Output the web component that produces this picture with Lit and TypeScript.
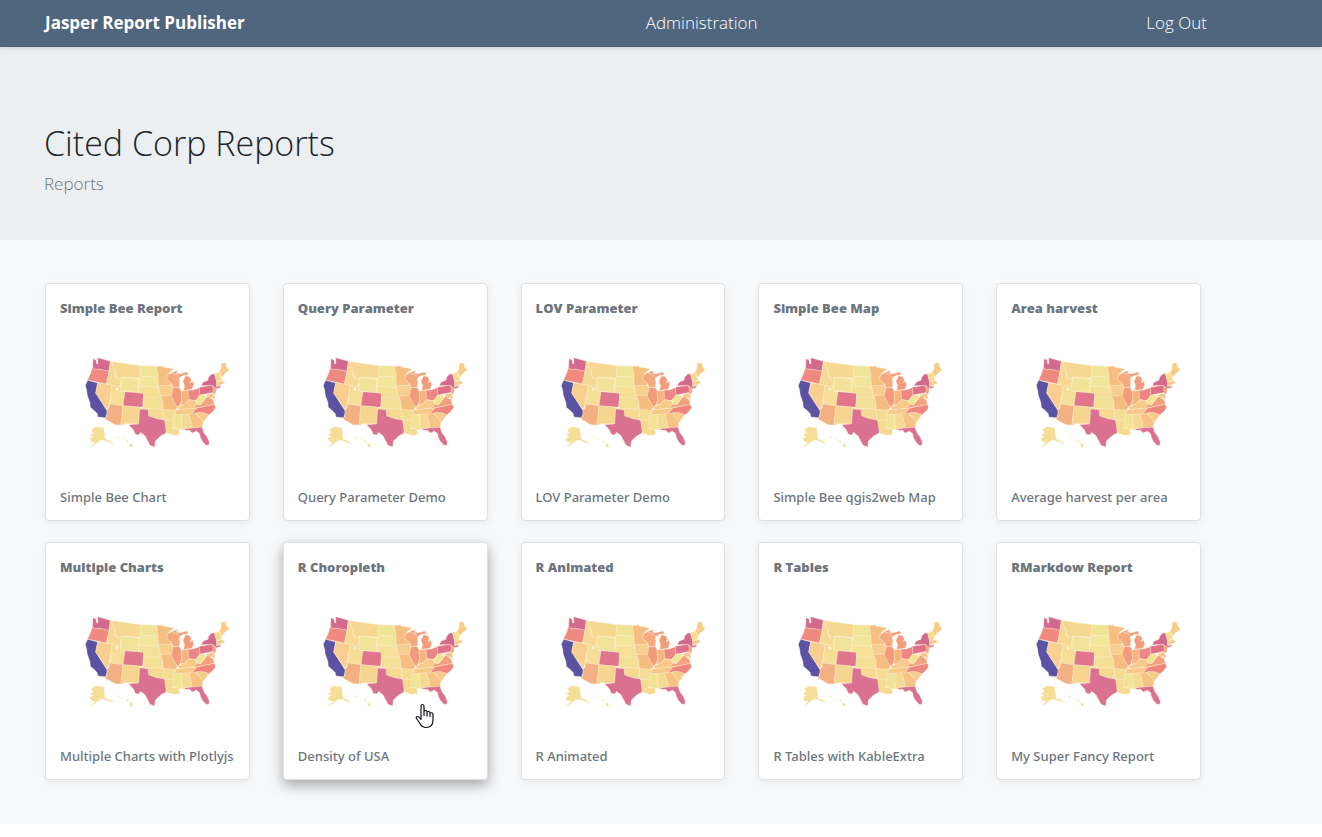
import { LitElement, html, svg, css } from "lit";
import { customElement, property } from "lit/decorators.js";

const STATES: [string, string][] = [
  ["#d4698f", "189,266 198,270 200,282 204,281 203,263 241,274 237,304 208,298 193,298 188,292"],
  ["#f0897f", "188,292 193,298 208,298 237,304 235,316 229,342 173,330 182,310"],
  ["#5b52a3", "173,331 203,339 197,369 231,422 231,430 227,443 204,441 202,431 192,421 181,412 180,398 172,376 170,360 166,346"],
  ["#f8cf90", "203,338 246,346 238,402 231,420 197,369"],
  ["#f6d994", "241,274 247,275 248,289 256,304 254,314 262,327 274,325 271,351 229,342 235,316 237,304"],
  ["#f6d892", "247,275 332,287 330,325 275,321 272,326 262,326 255,312 257,304 248,289"],
  ["#f2e39a", "275,322 328,327 324,368 271,362"],
  ["#f5de96", "246,345 272,350 271,362 285,365 279,407 240,402"],
  ["#ffffff", "257,353 262,354 264,360 260,361"],
  ["#e0758b", "285,365 341,370 338,412 279,407"],
  ["#f3b183", "240,402 279,407 273,465 255,464 225,447 231,438 231,420 237,415 238,404"],
  ["#f6d590", "279,407 329,412 326,462 297,461 282,461 280,465 273,465"],
  ["#f2e496", "332,287 380,289 384,321 330,319"],
  ["#f1e69b", "330,319 384,321 385,354 372,351 327,349"],
  ["#f4e197", "327,349 372,351 385,354 393,384 341,384 341,370 325,368"],
  ["#f4df97", "341,384 393,384 398,392 399,418 339,415"],
  ["#f6da92", "329,414 399,418 402,448 380,446 356,438 354,419 329,417"],
  ["#da7190", "329,417 354,419 356,438 380,446 404,450 409,474 408,489 392,498 376,513 374,531 360,526 355,516 345,497 332,487 326,495 316,493 310,479 296,464 326,462"],
  ["#f6bf82", "380,289 395,289 396,285 399,291 432,297 419,307 412,316 410,328 424,340 424,346 385,348 384,321"],
  ["#f8cf8e", "385,347 425,346 431,360 424,377 391,377"],
  ["#f5bd80", "391,377 424,376 430,391 439,405 442,412 437,421 400,419 398,392"],
  ["#f5dc94", "399,419 437,421 430,451 403,450"],
  ["#f5da92", "404,451 430,451 428,476 444,477 449,488 446,494 431,496 409,489"],
  ["#f4a97f", "412,316 425,308 443,315 449,323 447,333 450,326 448,352 430,353 424,340 410,328"],
  ["#f29d7b", "425,308 438,303 445,304 438,309 450,312 470,306 476,314 460,316 449,323 443,315"],
  ["#f29c7c", "467,317 480,321 484,330 480,339 488,334 491,344 486,358 461,361 464,347 459,334"],
  ["#f29a7c", "430,353 448,353 453,362 455,392 446,411 440,408 430,391 424,377"],
  ["#f6b57f", "453,363 474,361 477,389 464,402 450,406 455,392"],
  ["#ed8684", "474,361 490,360 508,353 510,374 498,391 488,391 476,388"],
  ["#f7ca8b", "441,413 464,402 477,390 496,392 501,402 491,414 450,419"],
  ["#f7c889", "438,420 501,414 500,419 483,432 434,434"],
  ["#f1e494", "432,435 455,433 456,477 447,480 443,476 428,475 430,451"],
  ["#f5da94", "455,433 477,431 486,466 486,474 463,475 464,480 457,480"],
  ["#f7c385", "477,431 496,430 515,449 519,458 516,473 486,474 486,466"],
  ["#da7190", "464,476 486,474 516,472 522,489 531,500 538,517 536,526 528,526 517,514 511,502 509,491 499,483 487,489 479,481 465,481"],
  ["#f7cb8c", "496,430 510,426 520,428 537,434 519,458 508,440"],
  ["#f0877f", "501,414 553,403 557,413 548,425 537,434 520,428 508,427 486,432"],
  ["#f3a27e", "491,415 501,402 512,404 525,388 533,378 550,391 553,403"],
  ["#f0e591", "498,391 510,376 526,376 528,382 512,403 502,402"],
  ["#df7088", "508,352 547,346 551,357 552,367 510,375"],
  ["#d4698f", "514,347 519,337 534,331 536,322 544,313 553,311 560,336 560,350 573,347 570,353 557,356 547,346"],
  ["#f6dc90", "554,311 565,308 568,304 576,330 560,336"],
  ["#f9cb88", "568,305 573,297 574,281 582,278 587,280 590,292 598,299 589,307 583,311 576,322"],
  ["#f8c98b", "560,337 577,332 585,339 577,342 571,345 560,348"],
  ["#f3a681", "549,349 558,353 558,366 554,374 549,369"],
  ["#f7c38b", "527,376 549,370 555,382 551,391 546,380 542,387 535,379"],
  ["#f5de96", "184,479 198,470 221,474 225,507 241,514 251,522 235,516 222,511 212,511 201,518 192,526 180,531 196,517 184,515 179,505 190,500 180,494 190,489"],
  ["#f5de96", "262,500 267,501 266,505 262,503"],
  ["#f5de96", "277,507 283,509 280,511"],
  ["#f5de96", "288,511 296,514 292,518"],
  ["#f5de96", "299,520 309,525 306,532 300,531"],
];

@customElement("report-card")
class ReportCard extends LitElement {
  @property() heading = "";
  @property() caption = "";

  static styles = css`
    :host {
      display: block;
    }
    .card {
      box-sizing: border-box;
      display: flex;
      flex-direction: column;
      height: 100%;
      padding: 14px 14px 13px;
      color: #6c757d;
      background: #fff;
      border: 1px solid #dfe0e2;
      border-radius: 4px;
      box-shadow: 0 2px 8px rgba(0, 0, 0, 0.07);
      text-decoration: none;
    }
    :host([active]) .card {
      box-shadow: 0 5px 14px rgba(0, 0, 0, 0.35);
    }
    .heading {
      margin: 0;
      font-size: 13px;
      font-weight: 800;
      line-height: 20px;
    }
    .map {
      display: block;
      width: 148px;
      height: 94px;
      margin: 38px 0 37px 24px;
    }
    .state {
      stroke: #fbeccb;
      stroke-width: 1;
      stroke-linejoin: round;
    }
    .caption {
      margin: 0;
      font-family: "Noto Sans", "Open Sans", sans-serif;
      font-size: 13px;
      font-weight: 500;
      line-height: 20px;
      white-space: nowrap;
    }
  `;

  render() {
    return html`
      <a class="card" href="#">
        <h2 class="heading">${this.heading}</h2>
        <svg class="map" viewBox="162 258 444 282" role="img" aria-label="Map">
          ${STATES.map(([fill, points]) => svg`<polygon class="state" fill=${fill} points=${points}></polygon>`)}
        </svg>
        <p class="caption">${this.caption}</p>
      </a>
    `;
  }
}

const REPORTS = [
  ["Simple Bee Report", "Simple Bee Chart"],
  ["Query Parameter", "Query Parameter Demo"],
  ["LOV Parameter", "LOV Parameter Demo"],
  ["Simple Bee Map", "Simple Bee qgis2web Map"],
  ["Area harvest", "Average harvest per area"],
  ["Multiple Charts", "Multiple Charts with Plotlyjs"],
  ["R Choropleth", "Density of USA"],
  ["R Animated", "R Animated"],
  ["R Tables", "R Tables with KableExtra"],
  ["RMarkdow Report", "My Super Fancy Report"],
];

@customElement("app-root")
class AppRoot extends LitElement {
  static styles = css`
    :host {
      display: block;
      background: #f8f9fb;
      color: #212529;
      font-family: "Open Sans", "Noto Sans", sans-serif;
    }
    .bar {
      position: relative;
      display: grid;
      grid-template-columns: 6fr 5fr auto;
      align-items: center;
      padding: 9px 115px 10px 45px;
      background: #50667f;
      box-shadow: 0 1px 4px rgba(0, 0, 0, 0.15);
      font-size: 17px;
      line-height: 28px;
    }
    .link {
      color: #fff;
      font-weight: 300;
      text-decoration: none;
    }
    .brand {
      font-weight: 700;
    }
    .hero {
      padding: 72px 44px 43px;
      background: #ebeff2;
    }
    .title {
      margin: 0;
      font-size: 34px;
      font-weight: 300;
      line-height: 48px;
    }
    .subtitle {
      margin: 4px 0 0;
      color: #6c757d;
      font-size: 17px;
      font-weight: 300;
      line-height: 26px;
    }
    .reports {
      position: relative;
      display: grid;
      grid-template-columns: repeat(5, minmax(0, 1fr));
      gap: 21px 33px;
      padding: 43px 121px 44px 45px;
    }
    .slot {
      position: relative;
    }
    .pointer {
      position: absolute;
      left: 132px;
      top: 161px;
      width: 20px;
      height: 26px;
    }
  `;

  render() {
    return html`
      <nav class="bar">
        <a class="link brand" href="#">Jasper Report Publisher</a>
        <span><a class="link" href="#">Administration</a></span>
        <a class="link" href="#">Log Out</a>
      </nav>
      <header class="hero">
        <h1 class="title">Cited Corp Reports</h1>
        <p class="subtitle">Reports</p>
      </header>
      <main class="reports">
        ${REPORTS.map(([heading, caption], i) => {
          const active = i === 6;
          return html`
            <div class="slot">
              <report-card ?active=${active} .heading=${heading} .caption=${caption}></report-card>
              ${active
                ? html`<svg class="pointer" viewBox="0 0 20 26" aria-hidden="true">
                    <path
                      d="M6 15V3.500Q6 1.500 7.500 1.500T9 3.500V10V8Q11.500 6.500 12 9V10.500V9Q14.500 7.500 15 10V11.500V10Q18 9 18 12V17Q18 24.500 11 24.500Q7 24.500 5 20.500L1.500 15.500Q0.500 13.500 2.500 13.500Q4 13.500 6 16.500V13M9 9V13M12 10V13.500M15 11V14"
                      fill="#fff"
                      stroke="#111118"
                      stroke-width="1.2"
                      stroke-linejoin="round"
                    ></path>
                  </svg>`
                : null}
            </div>
          `;
        })}
      </main>
    `;
  }
}
